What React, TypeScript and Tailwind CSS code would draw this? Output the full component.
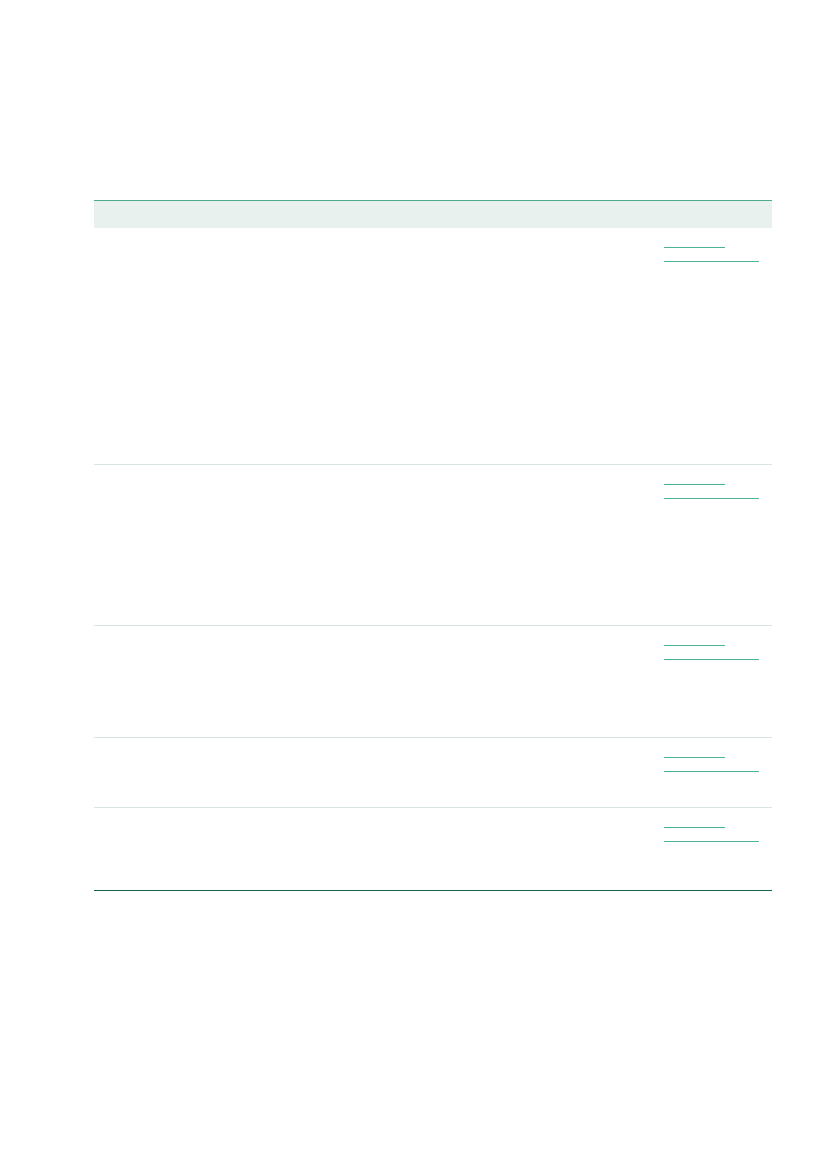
import React from "react";

const rows = [236, 161, 112, 70, 83];

function LinkLines() {
  return (
    <div className="flex flex-col gap-[13px] pl-2 pt-[19px]">
      <div className="h-px w-[61px] bg-[#4fb39a]" />
      <div className="h-px w-[95px] bg-[#4fb39a]" />
    </div>
  );
}

export default function App() {
  return (
    <div className="min-h-[1169px] w-full bg-white pt-[200px] font-['Liberation_Sans',sans-serif]">
      <div className="ml-[94px] flex w-[678px] flex-col border-b border-[#16664d]">
        <div className="flex h-[28px] border-t border-[#4aab8f] bg-[#e8f1ee]">
          <div className="w-[290px]" />
          <div className="flex-1" />
          <div className="w-[116px]" />
        </div>
        {rows.map((h, i) => (
          <div
            key={i}
            className={`flex ${i > 0 ? "border-t border-[#d8e5e0]" : ""}`}
            style={{ height: h }}
          >
            <div className="w-[290px]" />
            <div className="flex-1" />
            <div className="w-[116px]">
              <LinkLines />
            </div>
          </div>
        ))}
      </div>
    </div>
  );
}
